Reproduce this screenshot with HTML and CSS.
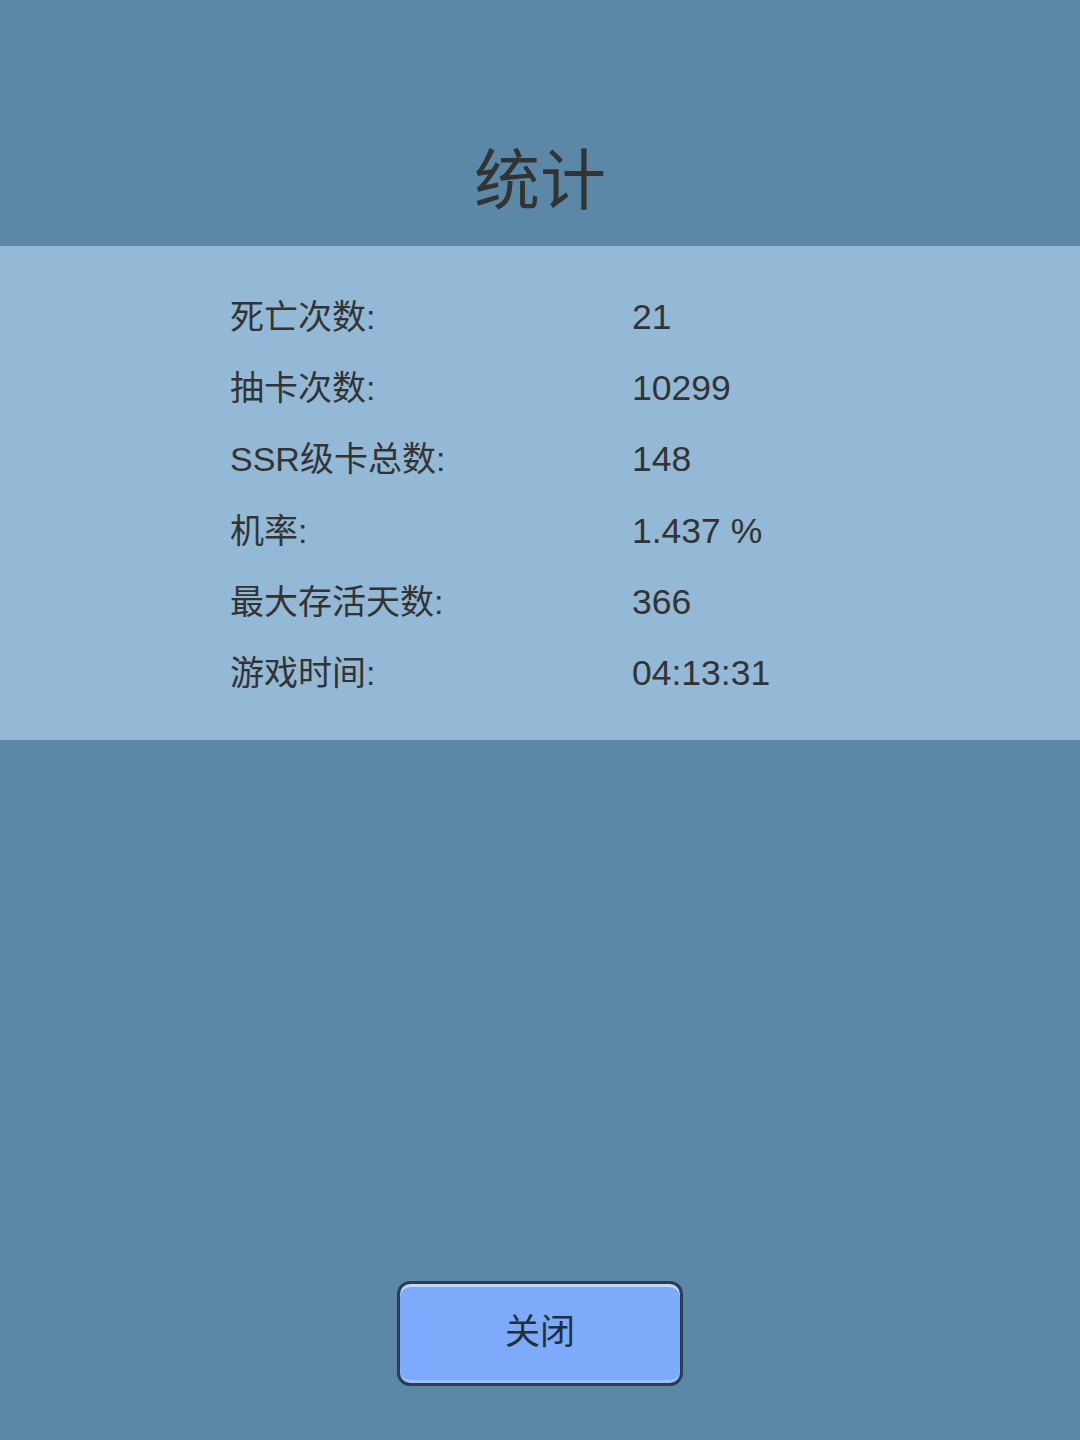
FILE: index.html
```html
<!DOCTYPE html>
<html lang="zh-CN">
<head>
    <meta charset="UTF-8">
    <title>统计</title>
    <link rel="stylesheet" href="styles.css">
</head>
<body>
    <div class="page">
        <h1 class="title">统计</h1>

        <!-- 统计面板 -->
        <div class="panel">
            <div class="stats">
                <div class="label">死亡次数:</div><div class="value">21</div>
                <div class="label">抽卡次数:</div><div class="value">10299</div>
                <div class="label">SSR级卡总数:</div><div class="value">148</div>
                <div class="label">机率:</div><div class="value">1.437 %</div>
                <div class="label">最大存活天数:</div><div class="value">366</div>
                <div class="label">游戏时间:</div><div class="value">04:13:31</div>
            </div>
        </div>

        <div class="footer">
            <button class="close-button">关闭</button>
        </div>
    </div>
</body>
</html>
```

FILE: styles.css
```css
body {
    margin: 0;
    padding: 0;
    background-color: #5c88a8;
    font-family: "Liberation Sans", "Noto Sans CJK SC", sans-serif;
    color: #333;
}

.page {
    height: 1440px;
    display: flex;
    flex-direction: column;
}

.title {
    margin: 0;
    height: 246px;
    box-sizing: border-box;
    padding-top: 141px;
    font-size: 66px;
    font-weight: normal;
    line-height: 80px;
    text-align: center;
    color: #333;
}

.panel {
    background-color: #93b9d6;
    height: 494px;
    box-sizing: border-box;
    padding: 36px 0 0 230px;
}

.stats {
    display: grid;
    grid-template-columns: 402px auto;
    grid-auto-rows: 71.2px;
    line-height: 71.2px;
}

.label {
    font-size: 34px;
}

.value {
    font-size: 35.5px;
}

.footer {
    flex: 1;
    display: flex;
    justify-content: center;
    align-items: flex-end;
    padding-bottom: 54px;
}

.close-button {
    width: 286px;
    height: 105px;
    padding: 0 0 10px;
    background-color: #7eaafc;
    border: 3px solid #2e3d52;
    border-radius: 13px;
    box-shadow: inset 0 3px 0 #c2d8fd, inset 0 -3px 0 #9cbefd;
    font-family: "Liberation Sans", "Noto Sans CJK SC", sans-serif;
    font-size: 35px;
    color: #1f2f3b;
    cursor: pointer;
}
```
